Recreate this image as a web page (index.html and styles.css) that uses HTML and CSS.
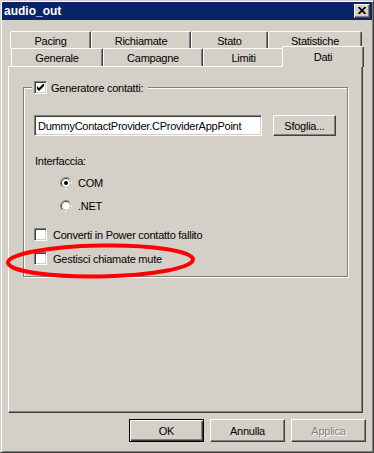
FILE: index.html
```html
<!DOCTYPE html>
<html lang="it">
<head>
    <meta charset="UTF-8">
    <title>audio_out</title>
    <link rel="stylesheet" href="styles.css">
</head>
<body>
    <div class="window">
        <div class="titlebar">
            <span class="title">audio_out</span>
            <span class="close">
                <svg width="8" height="7" viewBox="0 0 8 7"><path d="M0.5 0 L7.5 7 M7.5 0 L0.5 7" stroke="#000" stroke-width="1.7" fill="none"/></svg>
            </span>
        </div>

        <div class="body">
            <div class="tabrow back">
                <div class="tab tab-pacing">Pacing</div>
                <div class="tab tab-richiamate">Richiamate</div>
                <div class="tab tab-stato">Stato</div>
                <div class="tab tab-statistiche">Statistiche</div>
            </div>
            <div class="tabrow front">
                <div class="tab tab-generale">Generale</div>
                <div class="tab tab-campagne">Campagne</div>
                <div class="tab tab-limiti">Limiti</div>
                <div class="tab active">Dati</div>
            </div>

            <div class="panel">
                <div class="group">
                    <div class="legend">
                        <span class="check">
                            <svg width="7" height="7" viewBox="0 0 7 7"><polygon points="0,2 2,4 7,-1 7,2 2,7 0,5" fill="#000"/></svg>
                        </span>
                        <span>Generatore contatti:</span>
                    </div>

                    <div class="provider-row">
                        <div class="textbox">DummyContactProvider.CProviderAppPoint</div>
                        <button class="btn btn-sfoglia">Sfoglia...</button>
                    </div>

                    <div class="label">Interfaccia:</div>

                    <div class="option radio-row first">
                        <svg class="radio" width="12" height="12" viewBox="0 0 12 12">
                            <circle cx="6" cy="6" r="5.5" fill="#fff" stroke="#808080"/>
                            <path d="M9.89 2.11 A5.5 5.5 0 0 1 2.11 9.89" stroke="#fff" fill="none"/>
                            <circle cx="6" cy="6" r="4.5" fill="none" stroke="#404040"/>
                            <path d="M9.18 2.82 A4.5 4.5 0 0 1 2.82 9.18" stroke="#d4d0c8" fill="none"/>
                            <circle cx="6" cy="6" r="2" fill="#000"/>
                        </svg>
                        <span>COM</span>
                    </div>
                    <div class="option radio-row second">
                        <svg class="radio" width="12" height="12" viewBox="0 0 12 12">
                            <circle cx="6" cy="6" r="5.5" fill="#fff" stroke="#808080"/>
                            <path d="M9.89 2.11 A5.5 5.5 0 0 1 2.11 9.89" stroke="#fff" fill="none"/>
                            <circle cx="6" cy="6" r="4.5" fill="none" stroke="#404040"/>
                            <path d="M9.18 2.82 A4.5 4.5 0 0 1 2.82 9.18" stroke="#d4d0c8" fill="none"/>
                        </svg>
                        <span>.NET</span>
                    </div>

                    <div class="option check-row first">
                        <span class="check"></span>
                        <span>Converti in Power contatto fallito</span>
                    </div>
                    <div class="option check-row second">
                        <span class="check"></span>
                        <span>Gestisci chiamate mute</span>
                    </div>
                </div>
            </div>

            <div class="buttons">
                <button class="btn default">OK</button>
                <button class="btn">Annulla</button>
                <button class="btn disabled">Applica</button>
            </div>
        </div>

        <svg class="annotation" width="374" height="453" viewBox="0 0 374 453">
            <ellipse cx="99.5" cy="260" rx="92.5" ry="15.5" fill="none" stroke="#ff0000" stroke-width="4" transform="rotate(-1 99.5 260)"/>
        </svg>
    </div>
</body>
</html>
```

FILE: styles.css
```css
* {
    margin: 0;
    padding: 0;
    box-sizing: border-box;
}

body {
    font-family: "Liberation Sans", Arial, sans-serif;
    font-size: 11px;
    letter-spacing: -0.25px;
    color: #000;
    background-color: #d4d0c8;
}

.window {
    position: relative;
    width: 374px;
    height: 453px;
    background-color: #d4d0c8;
    border: 1px solid;
    border-color: #d4d0c8 #404040 #404040 #d4d0c8;
    box-shadow: inset 1px 1px #fff, inset -1px -1px #808080;
    padding: 1px;
    display: flex;
    flex-direction: column;
}

.titlebar {
    height: 18px;
    background-color: #0a246a;
    display: flex;
    align-items: center;
    justify-content: space-between;
    padding: 0 2px 0 2px;
}

.title {
    color: #fff;
    font-weight: bold;
    font-size: 12px;
    letter-spacing: 0;
}

.close {
    width: 16px;
    height: 14px;
    background-color: #d4d0c8;
    border: 1px solid;
    border-color: #fff #404040 #404040 #fff;
    box-shadow: inset -1px -1px #808080;
    display: flex;
    align-items: center;
    justify-content: center;
    padding-bottom: 1px;
}

.body {
    flex: 1;
    padding: 11px 6px 7px 6px;
    display: flex;
    flex-direction: column;
}

/* tabs */
.tabrow {
    display: flex;
    align-items: flex-end;
}

.tabrow.back {
    margin-left: 2px;
    margin-bottom: -3px;
}

.tabrow.front {
    margin-left: 3px;
}

.tab {
    height: 18px;
    background-color: #d4d0c8;
    border-top: 1px solid #fff;
    border-left: 1px solid #fff;
    border-right: 1px solid #404040;
    box-shadow: inset -1px 0 #808080;
    border-radius: 2px 2px 0 0;
    display: flex;
    align-items: center;
    justify-content: center;
}

.tab-pacing { width: 81px; }
.tab-richiamate { width: 100px; }
.tab-stato { width: 77px; }
.tab-statistiche { width: 94px; }
.tab-generale { width: 92px; }
.tab-campagne { width: 100px; }
.tab-limiti { width: 81px; }

.tab.active {
    width: 82px;
    height: 21px;
    margin-left: -2px;
    margin-bottom: -1px;
    padding-bottom: 1px;
    position: relative;
    z-index: 1;
}

/* property page */
.panel {
    width: 355px;
    height: 347px;
    border: 1px solid;
    border-color: #fff #404040 #404040 #fff;
    box-shadow: inset -1px -1px #808080;
    padding: 20px 0 0 14px;
}

.group {
    position: relative;
    width: 325px;
    border: 1px solid #808080;
    box-shadow: inset 1px 1px #fff, 1px 1px #fff;
    padding: 27px 10px 11px 10px;
    display: flex;
    flex-direction: column;
}

.legend {
    position: absolute;
    top: -7px;
    left: 8px;
    height: 13px;
    padding: 0 5px 0 2px;
    background-color: #d4d0c8;
    display: flex;
    align-items: center;
    gap: 4px;
}

.check {
    width: 13px;
    height: 13px;
    flex-shrink: 0;
    background-color: #fff;
    border: 1px solid;
    border-color: #808080 #fff #fff #808080;
    box-shadow: inset 1px 1px #404040, inset -1px -1px #d4d0c8;
    display: flex;
    align-items: center;
    justify-content: center;
}

.provider-row {
    display: flex;
    align-items: center;
    gap: 11px;
}

.textbox {
    width: 228px;
    height: 21px;
    background-color: #fff;
    border: 1px solid;
    border-color: #808080 #fff #fff #808080;
    box-shadow: inset 1px 1px #404040, inset -1px -1px #d4d0c8;
    padding-left: 3px;
    display: flex;
    align-items: center;
    white-space: nowrap;
    overflow: hidden;
}

.label {
    margin-top: 19px;
    margin-left: 1px;
    line-height: 13px;
}

.option {
    height: 13px;
    display: flex;
    align-items: center;
}

.radio-row {
    margin-left: 26px;
    gap: 6px;
}

.radio-row.first { margin-top: 8px; }
.radio-row.second { margin-top: 10px; }

.check-row {
    gap: 6px;
}

.check-row.first { margin-top: 16px; }
.check-row.second { margin-top: 11px; }

/* buttons */
.btn {
    width: 75px;
    height: 23px;
    font-family: inherit;
    font-size: 11px;
    letter-spacing: -0.25px;
    color: #000;
    background-color: #d4d0c8;
    border: 1px solid;
    border-color: #fff #404040 #404040 #fff;
    box-shadow: inset -1px -1px #808080;
    cursor: pointer;
}

.btn-sfoglia {
    width: 63px;
    height: 21px;
}

.btn.default {
    border-color: #000;
    box-shadow: inset 1px 1px #fff, inset -1px -1px #404040, inset -2px -2px #808080;
}

.btn.disabled {
    color: #808080;
    text-shadow: 1px 1px #fff;
}

.buttons {
    margin-top: 6px;
    display: flex;
    justify-content: flex-end;
    gap: 6px;
}

.annotation {
    position: absolute;
    top: 0;
    left: 0;
    pointer-events: none;
}
```
